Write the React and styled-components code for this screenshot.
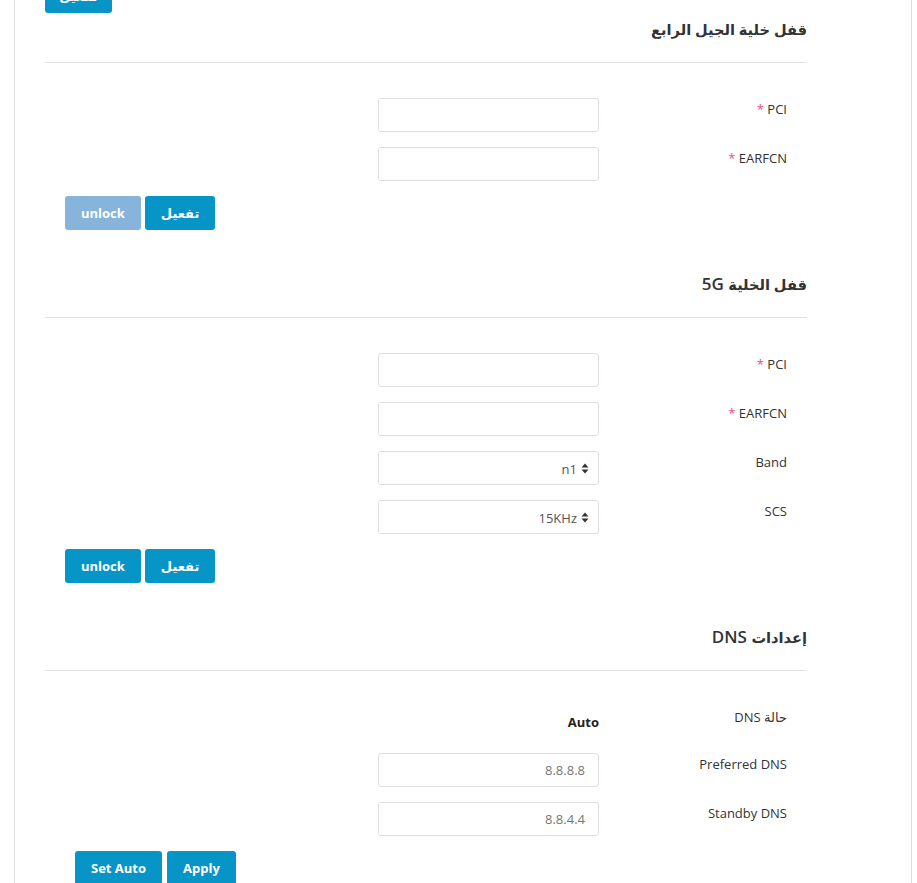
import React from 'react';
import styled, { createGlobalStyle } from 'styled-components';

const GlobalStyle = createGlobalStyle`
  html, body {
    margin: 0;
    padding: 0;
    background: #fff;
    font-family: "Open Sans", "DejaVu Sans", sans-serif;
    color: #333;
    overflow: hidden;
  }
`;

const Caret = () => (
  <svg width="8" height="11" viewBox="0 0 8 11">
    <path d="M4 0.5 L7.5 4.5 L0.5 4.5 Z" fill="#333" />
    <path d="M4 10.5 L7.5 6.5 L0.5 6.5 Z" fill="#333" />
  </svg>
);

const App = () => {
  return (
    <>
      <GlobalStyle />
      <Page>
        <Content>
          <TopButton>تفعيل</TopButton>

          <SectionTitle><Ar>قفل خلية الجيل الرابع</Ar></SectionTitle>
          <Form>
            <Row>
              <TextInput />
              <Label><Star>*</Star> PCI</Label>
            </Row>
            <Row>
              <TextInput />
              <Label><Star>*</Star> EARFCN</Label>
            </Row>
            <Buttons>
              <Button disabled>unlock</Button>
              <Button>تفعيل</Button>
            </Buttons>
          </Form>

          <SectionTitle><Ar>قفل الخلية</Ar> 5G</SectionTitle>
          <Form>
            <Row>
              <TextInput />
              <Label><Star>*</Star> PCI</Label>
            </Row>
            <Row>
              <TextInput />
              <Label><Star>*</Star> EARFCN</Label>
            </Row>
            <Row>
              <Select><span>n1</span><Caret /></Select>
              <Label>Band</Label>
            </Row>
            <Row>
              <Select><span>15KHz</span><Caret /></Select>
              <Label>SCS</Label>
            </Row>
            <Buttons>
              <Button>unlock</Button>
              <Button>تفعيل</Button>
            </Buttons>
          </Form>

          <SectionTitle><Ar>إعدادات</Ar> DNS</SectionTitle>
          <Form>
            <Row $short>
              <Status>Auto</Status>
              <Label dir="rtl">حالة DNS</Label>
            </Row>
            <Row>
              <TextInput value="8.8.8.8" />
              <Label>Preferred DNS</Label>
            </Row>
            <Row>
              <TextInput value="8.8.4.4" />
              <Label>Standby DNS</Label>
            </Row>
            <Buttons $wide>
              <Button>Set Auto</Button>
              <Button>Apply</Button>
            </Buttons>
          </Form>
        </Content>
      </Page>
    </>
  );
};

const TextInput = ({ value }) => (
  <InputBox>{value}</InputBox>
);

const Page = styled.div`
  margin-left: 14px;
  width: 896px;
  min-height: 883px;
  border-left: 1px solid #dcdcdc;
  border-right: 1px solid #dcdcdc;
`;

const Content = styled.div`
  margin-top: -21px;
  padding-left: 30px;
  width: 762px;
`;

const TopButton = styled.button`
  display: block;
  width: 67px;
  height: 34px;
  margin-bottom: 4px;
  border: none;
  border-radius: 3px;
  background: #0795c7;
  color: #fff;
  font-family: inherit;
  font-size: 13px;
  font-weight: 700;
`;

const SectionTitle = styled.div`
  height: 24px;
  padding-bottom: 21px;
  border-bottom: 1px solid #e1e1e6;
  text-align: right;
  direction: rtl;
  font-size: 17px;
  font-weight: 600;
  line-height: 24px;
  color: #333;
`;

const Ar = styled.span`
  font-size: 0.86em;
`;

const Form = styled.div`
  padding-top: 35px;
  padding-bottom: 42px;
`;

const Row = styled.div`
  display: grid;
  grid-template-columns: 333px 221px 208px;
  height: ${p => (p.$short ? '32px' : '34px')};
  margin-bottom: 15px;
  & > :first-child {
    grid-column: 2;
  }
`;

const Label = styled.div`
  padding-right: 20px;
  text-align: right;
  font-size: 13px;
  line-height: 22px;
  color: #333;
`;

const Star = styled.span`
  color: #ef4b81;
`;

const InputBox = styled.div`
  box-sizing: border-box;
  height: 34px;
  padding: 0 13px;
  border: 1px solid #dcdfe6;
  border-radius: 3px;
  background: #fff;
  text-align: right;
  font-size: 13px;
  line-height: 32px;
  color: #777;
`;

const Select = styled.div`
  box-sizing: border-box;
  height: 34px;
  padding: 0 9px 0 13px;
  border: 1px solid #dcdfe6;
  border-radius: 3px;
  display: flex;
  align-items: center;
  justify-content: flex-end;
  gap: 4px;
  font-size: 13px;
  color: #555;
  span {
    padding-top: 1px;
  }
`;

const Status = styled.div`
  text-align: right;
  font-size: 13px;
  font-weight: 700;
  line-height: 32px;
  color: #222;
`;

const Buttons = styled.div`
  display: flex;
  gap: ${p => (p.$wide ? '5px' : '4px')};
  padding-left: ${p => (p.$wide ? '30px' : '20px')};
  margin-top: ${p => (p.$wide ? '1px' : '0')};
`;

const Button = styled.button`
  height: 34px;
  padding: 0 16px;
  border: none;
  border-radius: 3px;
  background: ${p => (p.disabled ? '#86b4da' : '#0795c7')};
  color: #fff;
  font-family: inherit;
  font-size: 13px;
  font-weight: 700;
  min-width: 68px;
`;

export default App;
